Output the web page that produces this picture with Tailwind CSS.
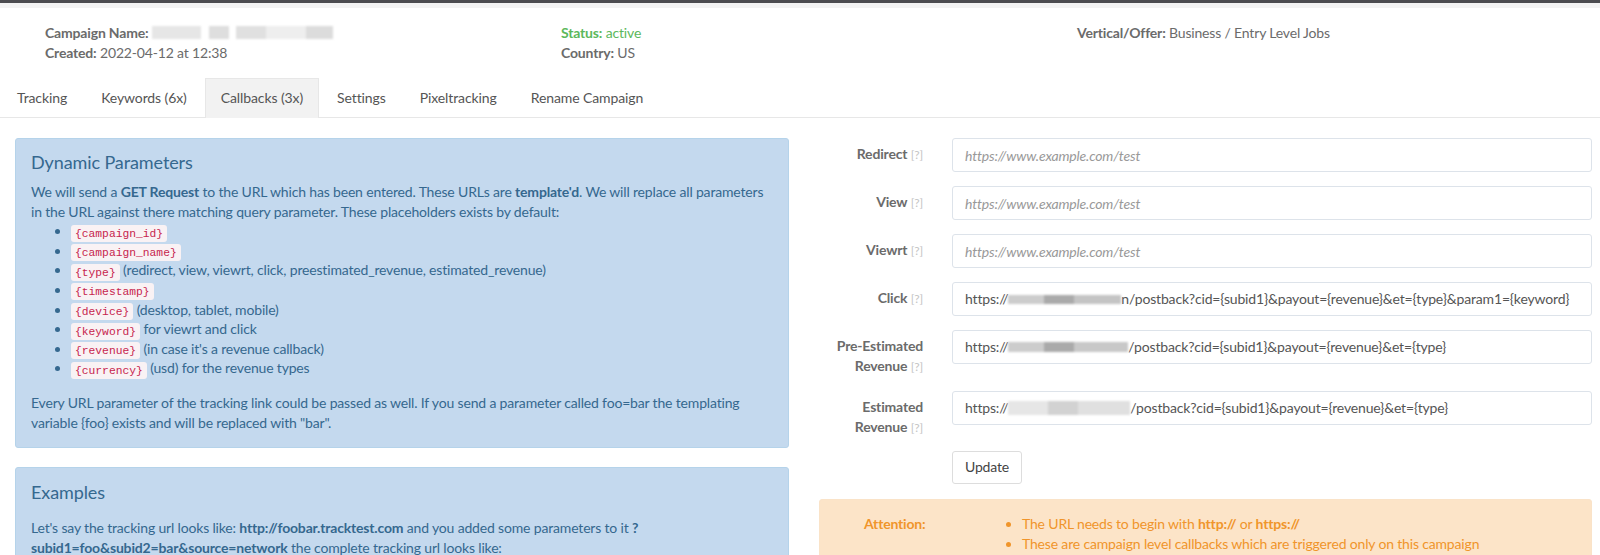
<!DOCTYPE html>
<html lang="en">
<head>
    <meta charset="UTF-8" />
    <meta name="viewport" content="width=device-width, initial-scale=1.0"/>
    <title>Campaign Callbacks</title>
    <script src="https://cdn.jsdelivr.net/npm/@tailwindcss/browser@4"></script>
</head>
<body class="h-[555px] overflow-hidden bg-white font-['Lato',sans-serif] text-[14px] leading-[19.6px] tracking-[-0.17px] text-[#6b6b6b]">
    <div class="h-[3px] bg-[#4c4c50]"></div>
    <div class="h-[5px] bg-[#f3f3f3]"></div>

    <!-- campaign info -->
    <div class="grid grid-cols-[516px_516px_1fr] pl-[45px] pt-[15px] h-[69px]">
        <div>
            <div class="flex items-center"><b>Campaign Name:</b>
                <span class="ml-[3px] flex blur-[1px]">
                    <span class="h-[13px] w-[49px] bg-[#e6e6e6]"></span>
                    <span class="ml-[8px] h-[13px] w-[20px] bg-[#dedede]"></span>
                    <span class="ml-[7px] h-[13px] w-[30px] bg-[#e0e0e0]"></span>
                    <span class="h-[13px] w-[40px] bg-[#eeeeee]"></span>
                    <span class="h-[13px] w-[27px] bg-[#dcdcdc]"></span>
                </span>
            </div>
            <div><b>Created:</b> 2022-04-12 at 12:38</div>
        </div>
        <div>
            <div class="text-[#5cb85c]"><b>Status:</b> active</div>
            <div><b>Country:</b> US</div>
        </div>
        <div><b>Vertical/Offer:</b> Business / Entry Level Jobs</div>
    </div>

    <!-- tabs -->
    <div class="flex h-[41px] border-b border-[#e7e7e7] tracking-[-0.1px] text-[#555]">
        <a class="mr-[2px] h-[40px] pl-[17px] pr-[16px] pt-[11px]">Tracking</a>
        <a class="mr-[2px] h-[40px] px-[16px] pt-[11px]">Keywords (6x)</a>
        <a class="mr-[2px] mt-[1px] h-[40px] border border-b-0 border-[#e7e7e7] bg-[#f2f2f2] px-[15px] pt-[9px]">Callbacks (3x)</a>
        <a class="mr-[2px] h-[40px] px-[16px] pt-[11px]">Settings</a>
        <a class="mr-[2px] h-[40px] px-[16px] pt-[11px]">Pixeltracking</a>
        <a class="mr-[2px] h-[40px] px-[16px] pt-[11px]">Rename Campaign</a>
    </div>

    <div class="flex pt-[20px]">
        <!-- left column -->
        <div class="w-[804px] shrink-0 px-[15px] text-[#35688f]">
            <div class="h-[310px] rounded-[3px] border border-[#b5d3ea] bg-[#c4d9ee] px-[15px] pt-[13px]">
                <h4 class="mb-[10px] text-[18px] leading-[20px] tracking-[-0.1px]">Dynamic Parameters</h4>
                <p>We will send a <b>GET Request</b> to the URL which has been entered. These URLs are <b>template'd</b>. We will replace all parameters in the URL against there matching query parameter. These placeholders exists by default:</p>
                <ul class="list-disc pl-[40px]">
                    <li class="h-[19.6px]"><code class="rounded-[3px] bg-[#f9f2f4] px-[4px] py-[2.5px] font-['Liberation_Mono',monospace] text-[11.3px] tracking-normal text-[#c7254e]">{campaign_id}</code></li>
                    <li class="h-[19.6px]"><code class="rounded-[3px] bg-[#f9f2f4] px-[4px] py-[2.5px] font-['Liberation_Mono',monospace] text-[11.3px] tracking-normal text-[#c7254e]">{campaign_name}</code></li>
                    <li class="h-[19.6px]"><code class="rounded-[3px] bg-[#f9f2f4] px-[4px] py-[2.5px] font-['Liberation_Mono',monospace] text-[11.3px] tracking-normal text-[#c7254e]">{type}</code> (redirect, view, viewrt, click, preestimated_revenue, estimated_revenue)</li>
                    <li class="h-[19.6px]"><code class="rounded-[3px] bg-[#f9f2f4] px-[4px] py-[2.5px] font-['Liberation_Mono',monospace] text-[11.3px] tracking-normal text-[#c7254e]">{timestamp}</code></li>
                    <li class="h-[19.6px]"><code class="rounded-[3px] bg-[#f9f2f4] px-[4px] py-[2.5px] font-['Liberation_Mono',monospace] text-[11.3px] tracking-normal text-[#c7254e]">{device}</code> (desktop, tablet, mobile)</li>
                    <li class="h-[19.6px]"><code class="rounded-[3px] bg-[#f9f2f4] px-[4px] py-[2.5px] font-['Liberation_Mono',monospace] text-[11.3px] tracking-normal text-[#c7254e]">{keyword}</code> for viewrt and click</li>
                    <li class="h-[19.6px]"><code class="rounded-[3px] bg-[#f9f2f4] px-[4px] py-[2.5px] font-['Liberation_Mono',monospace] text-[11.3px] tracking-normal text-[#c7254e]">{revenue}</code> (in case it's a revenue callback)</li>
                    <li class="h-[19.6px]"><code class="rounded-[3px] bg-[#f9f2f4] px-[4px] py-[2.5px] font-['Liberation_Mono',monospace] text-[11.3px] tracking-normal text-[#c7254e]">{currency}</code> (usd) for the revenue types</li>
                </ul>
                <p class="mt-[15px]">Every URL parameter of the tracking link could be passed as well. If you send a parameter called foo=bar the templating variable {foo} exists and will be replaced with "bar".</p>
            </div>
            <div class="mt-[19px] rounded-[3px] border border-[#b5d3ea] bg-[#c4d9ee] px-[15px] pt-[14px] pb-[40px]">
                <h4 class="mb-[16px] text-[18px] leading-[20px] tracking-[-0.1px]">Examples</h4>
                <p>Let's say the tracking url looks like: <b>http://foobar.tracktest.com</b> and you added some parameters to it <b>?subid1=foo&amp;subid2=bar&amp;source=network</b> the complete tracking url looks like:</p>
            </div>
        </div>

        <!-- right column -->
        <div class="min-w-0 flex-1 pl-[15px] pr-[8px]">
            <div class="mb-[14px] flex">
                <label class="w-[104px] shrink-0 pt-[6px] text-right"><b>Redirect</b> <span class="text-[12px] text-[#c4c4c4]">[?]</span></label>
                <input class="ml-[29px] h-[34px] min-w-0 flex-1 rounded-[3px] border border-[#dde3ea] px-[12px] placeholder:italic placeholder:text-[#999]" placeholder="https://www.example.com/test">
            </div>
            <div class="mb-[14px] flex">
                <label class="w-[104px] shrink-0 pt-[6px] text-right"><b>View</b> <span class="text-[12px] text-[#c4c4c4]">[?]</span></label>
                <input class="ml-[29px] h-[34px] min-w-0 flex-1 rounded-[3px] border border-[#dde3ea] px-[12px] placeholder:italic placeholder:text-[#999]" placeholder="https://www.example.com/test">
            </div>
            <div class="mb-[14px] flex">
                <label class="w-[104px] shrink-0 pt-[6px] text-right"><b>Viewrt</b> <span class="text-[12px] text-[#c4c4c4]">[?]</span></label>
                <input class="ml-[29px] h-[34px] min-w-0 flex-1 rounded-[3px] border border-[#dde3ea] px-[12px] placeholder:italic placeholder:text-[#999]" placeholder="https://www.example.com/test">
            </div>
            <div class="mb-[14px] flex">
                <label class="w-[104px] shrink-0 pt-[6px] text-right"><b>Click</b> <span class="text-[12px] text-[#c4c4c4]">[?]</span></label>
                <div class="ml-[29px] flex h-[34px] min-w-0 flex-1 items-center whitespace-nowrap rounded-[3px] border border-[#dde3ea] px-[12px] text-[#555]">https://<span class="flex h-[9px] w-[113px] blur-[1px]"><span class="w-[36px] bg-[#cccccc]"></span><span class="w-[30px] bg-[#aaaaaa]"></span><span class="w-[47px] bg-[#c4c4c4]"></span></span>n/postback?cid={subid1}&amp;payout={revenue}&amp;et={type}&amp;param1={keyword}</div>
            </div>
            <div class="mb-[14px] flex h-[47px]">
                <label class="w-[104px] shrink-0 pt-[6px] text-right"><b>Pre-Estimated Revenue</b> <span class="text-[12px] text-[#c4c4c4]">[?]</span></label>
                <div class="ml-[29px] flex h-[34px] min-w-0 flex-1 items-center whitespace-nowrap rounded-[3px] border border-[#dde3ea] px-[12px] text-[#555]">https://<span class="flex h-[10px] w-[120px] blur-[1px]"><span class="w-[36px] bg-[#cccccc]"></span><span class="w-[30px] bg-[#aaaaaa]"></span><span class="w-[54px] bg-[#c8c8c8]"></span></span>/postback?cid={subid1}&amp;payout={revenue}&amp;et={type}</div>
            </div>
            <div class="mb-[14px] flex h-[47px]">
                <label class="w-[104px] shrink-0 pt-[6px] text-right"><b>Estimated Revenue</b> <span class="text-[12px] text-[#c4c4c4]">[?]</span></label>
                <div class="ml-[29px] flex h-[34px] min-w-0 flex-1 items-center whitespace-nowrap rounded-[3px] border border-[#dde3ea] px-[12px] text-[#555]">https://<span class="flex h-[14px] w-[122px] blur-[1px]"><span class="w-[40px] bg-[#e6e6e6]"></span><span class="w-[30px] bg-[#d2d2d2]"></span><span class="w-[52px] bg-[#e0e0e0]"></span></span>/postback?cid={subid1}&amp;payout={revenue}&amp;et={type}</div>
            </div>
            <button class="-mt-[1px] ml-[133px] block h-[33px] w-[70px] rounded-[3px] border border-[#ddd] bg-white pb-[1px] text-[#444]">Update</button>
            <div class="mt-[15px] flex rounded-[3px] border border-[#fae3c8] bg-[#fce4c8] pl-[44px] pt-[14px] pb-[40px] text-[#f0952b]">
                <b class="w-[144px] shrink-0">Attention:</b>
                <ul class="list-disc pl-[14px]">
                    <li>The URL needs to begin with <b>http://</b> or <b>https://</b></li>
                    <li>These are campaign level callbacks which are triggered only on this campaign</li>
                </ul>
            </div>
        </div>
    </div>
</body>
</html>
